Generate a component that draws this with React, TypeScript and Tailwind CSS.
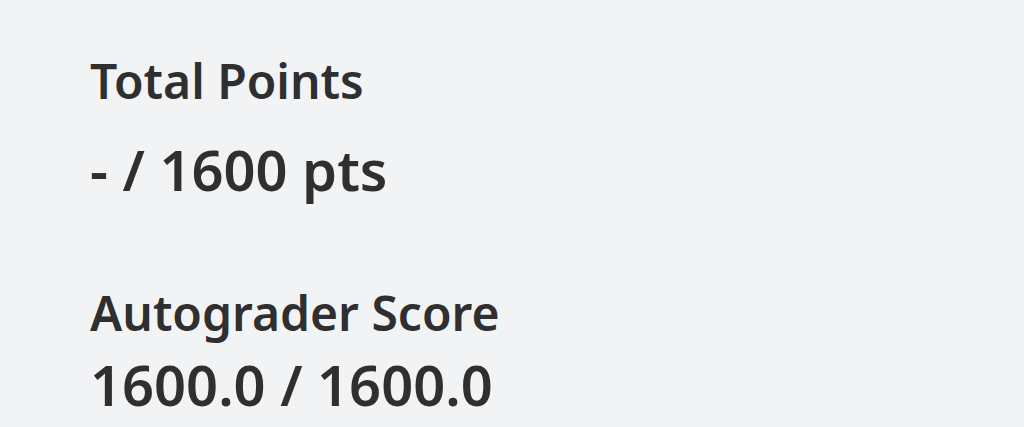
const Stat = ({ label, value, gap }: { label: string; value: string; gap: string }) => {
  return (
    <div className="flex flex-col">
      <span className="text-[48px] font-semibold leading-none text-[#2f2f2f]">{label}</span>
      <span className={`text-[56px] font-semibold leading-none text-[#2f2f2f] ${gap}`}>{value}</span>
    </div>
  );
};

const App = () => {
  return (
    <div
      className="w-[1024px] h-[427px] bg-[#f2f3f5] pl-[90px] pt-[57px] flex flex-col gap-[92px] overflow-hidden"
      style={{ fontFamily: '"Noto Sans", "Open Sans", sans-serif' }}
    >
      <Stat label="Total Points" value="- / 1600 pts" gap="mt-[36px]" />
      <Stat label="Autograder Score" value="1600.0 / 1600.0" gap="mt-[19px]" />
    </div>
  );
};

export default App;
